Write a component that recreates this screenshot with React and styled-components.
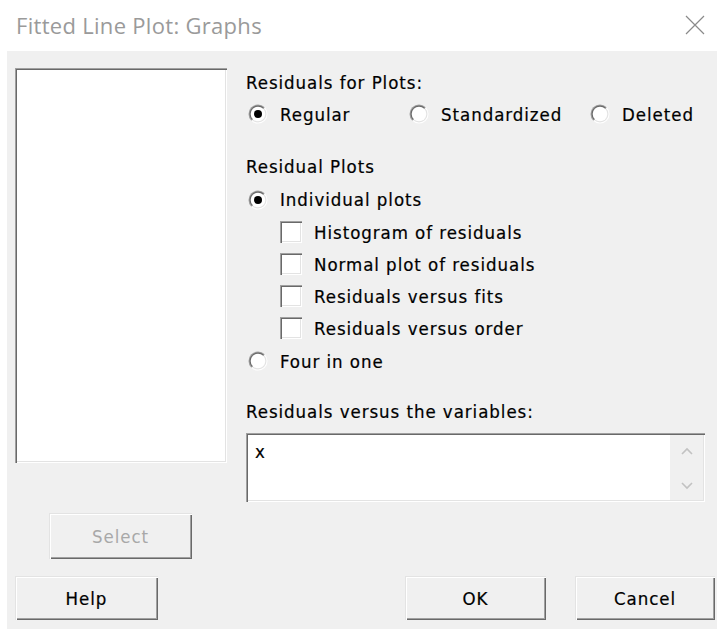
import React from 'react';
import styled, { createGlobalStyle } from 'styled-components';

const GlobalStyle = createGlobalStyle`
  html, body { margin: 0; padding: 0; background: #ffffff; }
  body {
    font-family: "DejaVu Sans Condensed", "DejaVu Sans", sans-serif;
    font-size: 18.5px;
    letter-spacing: 0.95px;
    -webkit-text-stroke: 0.2px #000;
    color: #000;
  }
  * { box-sizing: border-box; }
`;

const Window = styled.div`
  width: 717px;
  height: 629px;
  display: flex;
  flex-direction: column;
  background: #ffffff;
  overflow: hidden;
`;

const TitleBar = styled.div`
  height: 51px;
  flex: none;
  display: flex;
  align-items: center;
  justify-content: space-between;
  padding: 0 12px 2px 16px;
`;

const Title = styled.div`
  font-family: "Open Sans", "Noto Sans", sans-serif;
  font-size: 22px;
  letter-spacing: 0.3px;
  -webkit-text-stroke: 0;
  color: #9a9a9a;
`;

const CloseGlyph = styled.svg`
  display: block;
`;

const Client = styled.div`
  flex: 1;
  margin-left: 7px;
  background: #f0f0f0;
  display: flex;
  flex-direction: column;
  padding: 17px 2px 0 8px;
`;

const Main = styled.div`
  display: grid;
  grid-template-columns: 212px 459px;
  column-gap: 19px;
  align-items: start;
`;

const LeftColumn = styled.div`
  display: flex;
  flex-direction: column;
`;

const sunken = `
  background: #ffffff;
  box-shadow:
    inset 1px 1px 0 #a0a0a0,
    inset 2px 2px 0 #696969,
    inset -1px -1px 0 #ffffff,
    inset -2px -2px 0 #e3e3e3;
`;

const ListBox = styled.div`
  height: 395px;
  ${sunken}
`;

const Button = styled.button`
  width: ${(p) => p.$w}px;
  height: ${(p) => p.$h || 44}px;
  margin-left: ${(p) => p.$ml || 0}px;
  margin-top: ${(p) => p.$mt || 0}px;
  padding: 0;
  border: none;
  background: #f0f0f0;
  font-family: "DejaVu Sans Condensed", "DejaVu Sans", sans-serif;
  font-size: 18.5px;
  letter-spacing: 0.95px;
  color: ${(p) => (p.disabled ? '#a8a8a8' : '#000')};
  -webkit-text-stroke: ${(p) => (p.disabled ? '0' : '0.2px #000')};
  box-shadow:
    inset 1px 1px 0 #e3e3e3,
    inset 2px 2px 0 #ffffff,
    inset -1px -1px 0 #696969,
    inset -2px -2px 0 #a0a0a0;
`;

const RightColumn = styled.div`
  display: flex;
  flex-direction: column;
`;

const Label = styled.div`
  height: ${(p) => p.$h || 32}px;
  margin-top: ${(p) => p.$mt || 0}px;
  line-height: ${(p) => p.$h || 32}px;
  white-space: nowrap;
`;

const OptionGrid = styled.div`
  display: grid;
  grid-template-columns: 161px 181px auto;
  padding-left: 2px;
`;

const Option = styled.label`
  display: flex;
  align-items: center;
  gap: 12px;
  height: ${(p) => p.$h || 32}px;
  margin-top: ${(p) => p.$mt || 0}px;
  padding-left: ${(p) => p.$indent || 0}px;
  white-space: nowrap;
`;

const CheckBox = styled.span`
  width: 22px;
  height: 22px;
  flex: none;
  ${sunken}
`;

const VariableField = styled.div`
  margin-top: 5px;
  height: 69px;
  display: flex;
  ${sunken}
`;

const FieldText = styled.div`
  flex: 1;
  padding: 4px 0 0 9px;
  line-height: 30px;
`;

const ScrollStrip = styled.div`
  width: 33px;
  margin: 2px 2px 2px 0;
  background: #f0f0f0;
  display: flex;
  flex-direction: column;
  align-items: center;
  justify-content: space-between;
  padding: 12px 0 10px;
`;

const Footer = styled.div`
  display: flex;
  align-items: center;
  margin-top: 17px;
`;

const Spacer = styled.div`
  flex: 1;
`;

const RadioDot = ({ checked }) => (
  <svg width="20" height="20" viewBox="0 0 20 20" style={{ flex: 'none' }}>
    <defs>
      <linearGradient id="radioOuter" x1="0" y1="0" x2="1" y2="1">
        <stop offset="0.48" stopColor="#a0a0a0" />
        <stop offset="0.52" stopColor="#ffffff" />
      </linearGradient>
      <linearGradient id="radioInner" x1="0" y1="0" x2="1" y2="1">
        <stop offset="0.48" stopColor="#696969" />
        <stop offset="0.52" stopColor="#e3e3e3" />
      </linearGradient>
    </defs>
    <circle cx="10" cy="10" r="9.5" fill="url(#radioOuter)" />
    <circle cx="10" cy="10" r="8.5" fill="url(#radioInner)" />
    <circle cx="10" cy="10" r="7.3" fill="#ffffff" />
    {checked && <circle cx="10" cy="10" r="4" fill="#000000" />}
  </svg>
);

const Chevron = ({ up }) => (
  <svg width="12" height="8" viewBox="0 0 12 8">
    <path
      d={up ? 'M1 7 L6 2 L11 7' : 'M1 1 L6 6 L11 1'}
      fill="none"
      stroke="#c2c2c2"
      strokeWidth="1.6"
    />
  </svg>
);

const plotChecks = [
  'Histogram of residuals',
  'Normal plot of residuals',
  'Residuals versus fits',
  'Residuals versus order',
];

export default function App() {
  return (
    <>
      <GlobalStyle />
      <Window>
        <TitleBar>
          <Title>Fitted Line Plot: Graphs</Title>
          <CloseGlyph width="20" height="20" viewBox="0 0 20 20">
            <path d="M1 1 L19 19 M19 1 L1 19" stroke="#8a8a8a" strokeWidth="1.2" />
          </CloseGlyph>
        </TitleBar>
        <Client>
          <Main>
            <LeftColumn>
              <ListBox />
              <Button $w={143} $h={46} $ml={34} $mt={50} disabled>
                Select
              </Button>
            </LeftColumn>
            <RightColumn>
              <Label $h={30}>Residuals for Plots:</Label>
              <OptionGrid>
                <Option>
                  <RadioDot checked />
                  Regular
                </Option>
                <Option>
                  <RadioDot />
                  Standardized
                </Option>
                <Option>
                  <RadioDot />
                  Deleted
                </Option>
              </OptionGrid>
              <Label $mt={21}>Residual Plots</Label>
              <Option $indent={2} $h={33}>
                <RadioDot checked />
                Individual plots
              </Option>
              {plotChecks.map((text) => (
                <Option key={text} $indent={34}>
                  <CheckBox />
                  {text}
                </Option>
              ))}
              <Option $indent={2} $mt={1}>
                <RadioDot />
                Four in one
              </Option>
              <Label $mt={19}>Residuals versus the variables:</Label>
              <VariableField>
                <FieldText>x</FieldText>
                <ScrollStrip>
                  <Chevron up />
                  <Chevron />
                </ScrollStrip>
              </VariableField>
            </RightColumn>
          </Main>
          <Footer>
            <Button $w={143}>Help</Button>
            <Spacer />
            <Button $w={141}>OK</Button>
            <Button $w={140} $ml={29}>
              Cancel
            </Button>
          </Footer>
        </Client>
      </Window>
    </>
  );
}
